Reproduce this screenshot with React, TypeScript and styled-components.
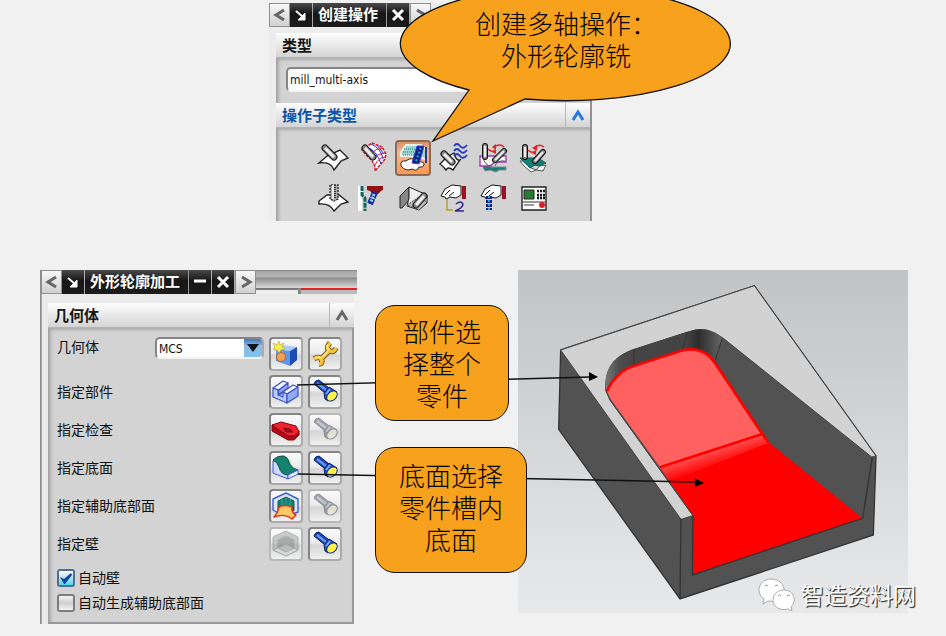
import React from 'react';
import styled, { createGlobalStyle, css } from 'styled-components';

const ORANGE = '#f7a11c';
const UI_FONT = '"Noto Sans", "Noto Sans CJK SC", sans-serif';

const GlobalStyle = createGlobalStyle`
  * { box-sizing: border-box; }
  body { margin: 0; background: #f1f1f1; }
  button, select, input { font: inherit; margin: 0; padding: 0; }
`;

const Slide = styled.main`
  min-height: 636px;
  overflow: hidden;
  background: #f1f1f1;
  color: #111;
  font: 14px/20px ${UI_FONT};
`;

const TopArea = styled.section`
  display: flex;
  padding: 3px 0 0 269px;
`;

const TopDialog = styled.div`
  position: relative;
  width: 323px;
  background: #ececec;
`;

const TitleBar = styled.header`
  display: flex;
  height: 24px;
`;

const TitleName = styled.h2`
  margin: 0;
  padding: 0 8px 0 5px;
  background: linear-gradient(#4a4a4a, #161616 45%, #1c1c1c);
  border-right: 1px solid #999;
  color: #fff;
  font-size: 15px;
  font-weight: 700;
  line-height: 22px;
  white-space: nowrap;
`;

const TitleButton = styled.button<{ $light?: boolean }>`
  display: grid;
  place-items: center;
  width: 23px;
  border: 0;
  border-right: 1px solid #aaa;
  background: ${(p) =>
    p.$light ? 'linear-gradient(#f8f8f8, #d0d0d0)' : 'linear-gradient(#4a4a4a, #161616 45%, #1c1c1c)'};
  ${(p) => p.$light && css`border: 1px solid #909090; width: 21px;`}
`;

const BehindStrip = styled.div`
  flex: 1;
  display: flex;
  flex-direction: column;
  border-top: 1px solid #888;
  background: linear-gradient(#a4a4a4, #b8b8b8 25%, #8c8c8c 30%, #d2d2d2 70%, #f1f1f1);
`;

const BehindTabs = styled.div`
  display: grid;
  grid-template-columns: 42px 1fr;
  gap: 3px;
  height: 6px;
  margin-top: auto;
  background: #888;
`;

const BehindTab = styled.span<{ $active?: boolean }>`
  background: ${(p) => (p.$active ? '#bbb' : '#eee')};
  border-top: 2px solid ${(p) => (p.$active ? '#e02128' : '#777')};
`;

const PanelHeader = styled.h3<{ $accent?: boolean }>`
  display: flex;
  align-items: stretch;
  height: 25px;
  margin: 0;
  padding-left: 6px;
  background: linear-gradient(#fdfdfd, #e9e9e9 50%, #d4d4d4);
  border-bottom: 1px solid #b4b4b4;
  color: ${(p) => (p.$accent ? '#0a55a8' : '#151515')};
  font-size: 15px;
  font-weight: 700;
  line-height: 24px;
`;

const CollapseButton = styled.button`
  display: grid;
  place-items: center;
  width: 25px;
  margin-left: auto;
  border: 0;
  border-left: 1px solid #b8b8b8;
  background: transparent;
`;

const TopPanels = styled.div`
  margin: 6px 0 0 7px;
  border-right: 2px solid #929292;
`;

const PanelBody = styled.div`
  background: #d3d3d3;
  border-left: 1px solid #a5a5a5;
  box-shadow: inset 2px 2px 3px #aaa;
`;

const TypeBody = styled(PanelBody)`
  padding: 9px 9px 11px;
`;

const SelectBox = styled.span<{ $compact?: boolean }>`
  display: flex;
  width: ${(p) => (p.$compact ? '109px' : '100%')};
  height: ${(p) => (p.$compact ? '22px' : '25px')};
  border: 2px solid #858585;
  border-right-color: #aaa;
  border-bottom-color: #f3f3f3;
  border-radius: 5px;
  background: #fff;
  overflow: hidden;
`;

const Select = styled.select`
  flex: 1;
  min-width: 0;
  padding-left: 2px;
  border: 0;
  background: transparent;
  appearance: none;
  color: #111;
  font-family: "DejaVu Sans Condensed", "Noto Sans", sans-serif;
  font-size: 12px;
`;

const DropMark = styled.span`
  display: grid;
  place-items: center;
  width: 18px;
  background: linear-gradient(#3a78c8, #8fbbe4 40%, #7fc0ee);
`;

const ToolGrid = styled(PanelBody)`
  display: grid;
  grid-template-columns: repeat(6, 36px);
  grid-auto-rows: 36px;
  gap: 4px;
  padding: 12px 0 5px 38px;
`;

const ToolButton = styled.button<{ $active?: boolean }>`
  display: grid;
  place-items: center;
  border: 0;
  background: transparent;
  ${(p) =>
    p.$active &&
    css`
      border: 2px solid #8d6a55;
      border-radius: 4px;
      background: linear-gradient(#d99468, #f7b98c 35%, #ff9850);
    `}
`;

const Bubble = styled.div`
  position: absolute;
  top: -16px;
  left: 132px;
  width: 330px;
  height: 156px;
`;

const BubbleShape = styled.svg`
  display: block;
  overflow: visible;
`;

const NoteText = styled.p`
  margin: 0;
  color: #000;
  font: 300 26px/32px "Noto Sans CJK SC", sans-serif;
  text-align: center;
`;

const BubbleText = styled(NoteText)`
  position: absolute;
  top: 20px;
  left: 70px;
  right: 70px;
`;

const BottomArea = styled.section`
  position: relative;
  display: grid;
  grid-template-columns: 317px 161px minmax(0, 1fr);
  align-items: start;
  padding: 49px 38px 11px 40px;
`;

const SideDialog = styled.div`
  border-left: 1px solid #8c8c8c;
`;

const SidePanel = styled.div`
  margin-right: 3px;
  padding: 9px 0 0 6px;
  border-left: 1px solid #aaa;
  background: #eaeaea;
`;

const GeometryBody = styled(PanelBody)`
  padding: 7px 10px 7px 8px;
  border-right: 2px solid #999;
  border-bottom: 2px solid #999;
`;

const FieldRow = styled.div<{ $top?: boolean }>`
  display: flex;
  align-items: ${(p) => (p.$top ? 'flex-start' : 'center')};
  gap: 5px;
  height: 38px;
  padding: ${(p) => (p.$top ? '2px 0' : '0')};
`;

const FieldLabel = styled.label`
  flex: 1;
  white-space: nowrap;
`;

const IconButton = styled.button`
  display: grid;
  width: 34px;
  height: 34px;
  border: 2px solid #858585;
  border-right-color: #aaa;
  border-bottom-color: #aaa;
  border-radius: 4px;
  background: linear-gradient(#fafafa, #ececec 45%, #d6d6d6 55%, #f0f0f0);
  &:disabled {
    border-color: #b8b8b8;
  }
  &:disabled svg {
    filter: grayscale(0.8);
    opacity: 0.45;
  }
`;

const ButtonArt = styled.svg`
  margin: -2px;
`;

const CheckList = styled.div`
  padding-top: 2px;
`;

const CheckRow = styled.label`
  display: flex;
  align-items: center;
  gap: 3px;
  height: 25px;
`;

const Check = styled.input`
  appearance: none;
  width: 18px;
  height: 18px;
  border: 2px solid #7d7d7d;
  border-radius: 3px;
  background: linear-gradient(#f4f4f4, #cfcfcf 50%, #f4f4f4);
  &:checked {
    border-color: #526d91;
    background: linear-gradient(#fff, #c6def6 45%, #47dced);
  }
`;

const CheckBox = styled.span`
  display: grid;
  > * { grid-area: 1 / 1; }
  svg { pointer-events: none; }
`;

const Notes = styled.div`
  z-index: 2;
  display: flex;
  flex-direction: column;
  align-items: flex-start;
  gap: 26px;
  padding: 35px 0 0 18px;
`;

const Note = styled.div<{ $wide?: boolean }>`
  width: ${(p) => (p.$wide ? '152px' : '134px')};
  padding: ${(p) => (p.$wide ? '11px 18px 17px' : '9px 26px')};
  border: 1px solid #111;
  border-radius: 20px;
  background: ${ORANGE};
`;

const Connectors = styled.svg`
  position: absolute;
  top: 49px;
  left: 0;
  z-index: 1;
  pointer-events: none;
`;

const ModelView = styled.figure`
  position: relative;
  margin: 0;
`;

const ModelArt = styled.svg`
  display: block;
  width: 100%;
  background: linear-gradient(#c2c3c4, #e8e9ea);
`;

const Watermark = styled.figcaption`
  position: absolute;
  right: -8px;
  bottom: 2px;
  display: flex;
  align-items: center;
  gap: 6px;
  color: #fff;
  font: 23px/34px "Noto Sans CJK SC", sans-serif;
  text-shadow: 1px 1px 1px #333, 1px 1px 0 #666;
  white-space: nowrap;
`;

/* ---------- small glyphs ---------- */

const Chevron = ({ dir, color = '#666' }: { dir: 'left' | 'right' | 'up'; color?: string }) => {
  const d = { left: 'M11 2 3 7l8 5', right: 'M3 2l8 5-8 5', up: 'M2 12 7 4l5 8' }[dir];
  return (
    <svg width="14" height="14" viewBox="0 0 14 14" fill="none" stroke={color} strokeWidth="3">
      <path d={d} />
    </svg>
  );
};

const PinArrow = () => (
  <svg width="14" height="14" viewBox="0 0 14 14" fill="#fff" stroke="#fff">
    <path d="M2 3l7 6" strokeWidth="2" />
    <path d="M11 5v7H4z" />
  </svg>
);

const Cross = () => (
  <svg width="14" height="14" viewBox="0 0 14 14" stroke="#fff" strokeWidth="3">
    <path d="M2 2l10 10M12 2 2 12" />
  </svg>
);

const Minus = () => (
  <svg width="14" height="14" viewBox="0 0 14 14" stroke="#fff" strokeWidth="3">
    <path d="M1 6h12" />
  </svg>
);

/* ---------- operation icons ---------- */

const Cutter = ({ d, w = 7 }: { d: string; w?: number }) => (
  <g fill="none">
    <path d={d} stroke="#111" strokeWidth={w} strokeLinecap="round" />
    <path d={d} stroke="#8a8a8a" strokeWidth={w - 2} strokeLinecap="round" />
    <path d={d} stroke="#eee" strokeWidth={w - 4} />
  </g>
);

const Hand = () => (
  <g stroke="#111" fill="#fff">
    <path d="M25 4v13h4V4z" fill="#9c1024" stroke="none" />
    <path d="M4 14 8 7l7-4 9 1v9l-5 3-6-1-4 2-1-2z" />
    <path d="M8 13l5-5M12 14l5-4" fill="none" />
  </g>
);

const toolArt: Record<string, React.ReactNode> = {
  surface: (
    <>
      <path d="M2 21 10 14l13-6 8 8-7 3-7 9q-3-9-15-7z" fill="#fff" stroke="#222" strokeWidth="1.4" />
      <path d="M5 21h3M23 19l4-2" stroke="#777" />
      <Cutter d="M8 6l9 9" />
    </>
  ),
  mesh: (
    <>
      <path d="M5 8 15 1l10 4 4 7-1 5-10 12q1-8-8-15z" fill="#fff" stroke="#d9142e" strokeDasharray="3 1" strokeWidth="1.5" />
      <path d="M9 5q11 3 15 17M14 2q10 4 12 15M20 3l7 9" fill="none" stroke="#1c25c9" strokeWidth="1" />
      <path d="M14 11q6-5 12-5M15 17q7-6 13-6M18 23q4-8 10-8" fill="none" stroke="#e01838" strokeWidth="1" />
      <Cutter d="M8 6l8 9" />
    </>
  ),
  contour: (
    <>
      <path d="M4 10 9 3h15l5 5v10l-7-4H4z" fill="#9ed3ce" stroke="#eee" strokeWidth="2" />
      <path d="M7 7h14M6 10h13M6 13h13" stroke="#168985" strokeDasharray="1 1" />
      <path d="M4 24q-1-6 5-5l3-2q6-1 8 3 8-1 7 3-1 3-5 2-2 5-7 2-6 3-11-3z" fill="#fff" stroke="#222" />
      <path d="M15 21 20 4h7l-5 18z" fill="#101d8d" stroke="#3248d5" />
      <path d="M19 19 24 5" stroke="#14b6b0" strokeWidth="2" strokeDasharray="2 2" />
      <path d="M29 5v16" stroke="#253a8b" strokeWidth="2" />
    </>
  ),
  waves: (
    <>
      <path d="M3 22 10 15l7-4q2 8 6 7l-7 10q-5-4-7 0-3-4-6-6z" fill="#fff" stroke="#222" strokeWidth="1.4" />
      <Cutter d="M7 12l8 8" />
      <path d="M17 4q3-4 6 0t7-1M17 9q3-4 6 0t7-1M17 14q3-4 6 0t7-1" fill="none" stroke="#2638bb" strokeWidth="1.8" />
    </>
  ),
  zigzag: (
    <>
      <path d="M3 19h4l6 6h16v3h-7l-3 2-6-2-5 1z" fill="#138076" stroke="#888" />
      <path d="M3 14h26v6H18l-5 4H3z" fill="#fff" stroke="#a23bb3" strokeWidth="1.4" />
      <path d="M6 14q1 10 9 10M18 24q2-6 10-5" fill="none" stroke="#555" />
      <Cutter d="M8 4v11" w={6} /><Cutter d="M27 9 18 18" w={6} />
      <path d="M11 7q4 4 8 1M17 5q6-4 10 0" fill="none" stroke="#ec2025" strokeWidth="1.4" />
      <path d="M15 5l4-3v6zM15 10l4-3v5z" fill="#ec2025" />
    </>
  ),
  swarf: (
    <>
      <path d="M3 19h4l5 6 7 3 4-4 6-1-3 6-7-1-5 2-7-6z" fill="#fff" stroke="#555" />
      <path d="M3 16h18l8 5-7 3-4-1-5 3z" fill="#138076" stroke="#09635c" />
      <Cutter d="M8 5v10" w={6} /><Cutter d="M26 10 18 19" w={6} />
      <path d="M11 8q4 4 8 1M17 6q5-5 10-1" fill="none" stroke="#ec2025" strokeWidth="1.4" />
      <path d="M15 6l5-3v6zM15 11l4-3v5z" fill="#ec2025" />
    </>
  ),
  drill: (
    <>
      <path d="M2 19 10 13h12l9 7-7 2-7 7q-4-8-15-7z" fill="#fff" stroke="#222" strokeWidth="1.4" />
      <path d="M13 3v14l4 2 4-2V3z" fill="#aaa" stroke="#333" strokeWidth="1.4" strokeDasharray="2 1" />
      <path d="M16 3v14" stroke="#eee" strokeWidth="2" />
      <path d="M18 3v14" stroke="#333" strokeDasharray="1 1" strokeWidth="2" />
    </>
  ),
  wall: (
    <>
      <path d="M1 4h4v25H1z" fill="#fff" />
      <path d="M5 4v9l3 3v13" fill="none" stroke="#0f6661" strokeWidth="3" strokeDasharray="5 1" />
      <path d="M10 4h16v4l-2 1-3 3h-5l-3-3-3-1z" fill="#901015" />
      <path d="M18 10 13 22" stroke="#1829a3" strokeWidth="6" strokeDasharray="6 1" />
      <path d="M17 12 14 20" stroke="#9bdce2" strokeWidth="3" strokeDasharray="2 1" />
    </>
  ),
  pocket: (
    <>
      <path d="M3 14 12 5v13l-7 8H3z" fill="#888" stroke="#222" />
      <path d="M12 5l18 8v8l-8 7-12-4 2-8z" fill="#eee" stroke="#222" />
      <path d="M10 23 22 15l8 5-8 8z" fill="#bbb" stroke="#444" strokeDasharray="2 1" />
      <Cutter d="M27 14 19 23" w={7} />
    </>
  ),
  handTwo: (
    <>
      <Hand />
      <path d="M10 17v11h6" fill="none" stroke="#b5a019" strokeWidth="1.4" />
      <path d="M19 22q5-4 7 0 0 4-8 7h9" fill="none" stroke="#342997" strokeWidth="1.6" />
    </>
  ),
  handTool: (
    <>
      <Hand />
      <path d="M12 14v14" stroke="#151f87" strokeWidth="6" strokeDasharray="3 1" />
      <path d="M12 14v14" stroke="#19abbc" strokeWidth="2" strokeDasharray="2 2" />
    </>
  ),
  console: (
    <>
      <path d="M5 5h24v23H5z" fill="#fff" stroke="#222" strokeWidth="1.4" />
      <path d="M7 8h10v9H7z" fill="#277c32" stroke="#222" />
      <path d="M20 9h8M20 13h8M20 16h8" stroke="#111" strokeWidth="2.4" strokeDasharray="2 1" />
      <path d="M6 20h22M7 23h10" stroke="#999" strokeWidth="2" />
      <circle cx="25" cy="23" r="3" fill="#e01c24" />
    </>
  ),
};

const tools: [string, string][] = [
  ['surface', '可变轴曲面轮廓铣'],
  ['mesh', '可变流线铣'],
  ['contour', '外形轮廓铣'],
  ['waves', '固定轮廓铣'],
  ['zigzag', '深度五轴铣'],
  ['swarf', '顺序铣'],
  ['drill', '钻孔'],
  ['wall', '侧壁'],
  ['pocket', '型腔'],
  ['handTwo', '用户定义'],
  ['handTool', '手动'],
  ['console', '机床控制'],
];

/* ---------- geometry icons ---------- */

const geometryArt: Record<string, React.ReactNode> = {
  newGeometry: (
    <>
      <path d="M7 12 14 8l14 2-7 4z" fill="#a9ccf8" />
      <path d="M7 12l14 2v15L7 24z" fill="#5e96ec" />
      <path d="M21 14l7-4v13l-7 6z" fill="#1c4bb6" />
      <circle cx="12" cy="20" r="4.5" fill="#f3a154" stroke="#b56129" />
      <path d="M10 4l1 4 4-2-2 4 3 2-4 1-2 3-2-3-4 0 2-3-2-4 4 2z" fill="#ffec42" stroke="#b1a330" strokeWidth=".6" />
    </>
  ),
  wrench: (
    <g fill="none" strokeLinejoin="round">
      <path d="M22 6q-5 5 0 8 4 2 6-3M6 22q6-4 8 2 0 3-3 3M13 22l9-9" stroke="#76511a" strokeWidth="5.4" />
      <path d="M22 6q-5 5 0 8 4 2 6-3M6 22q6-4 8 2 0 3-3 3M13 22l9-9" stroke="#f5c332" strokeWidth="3.6" />
      <path d="M20 8q-2 4 2 5M14 20l6-6M7 21q5-2 6 1" stroke="#fff0a0" strokeWidth="1.3" />
    </g>
  ),
  part: (
    <g stroke="#3c51c7" strokeWidth="1.2" strokeLinejoin="round">
      <path d="M4 13 14 6l5 2-9 7z" fill="#eef3ff" />
      <path d="M9 21l10-8v7l-5 3z" fill="#b7c9ff" />
      <path d="M10 15l9-7v5l-10 7z" fill="#92a7ec" />
      <path d="M4 13l5 2v5l5 2v-5l4 2v9L4 22z" fill="#b9ccff" />
      <path d="M14 17l10-7 5 2-11 7z" fill="#f8faff" />
      <path d="M18 19l11-7v9l-11 7z" fill="#90abf6" />
    </g>
  ),
  lamp: (
    <g strokeLinejoin="round">
      <path d="M6 9q1-4 5-4l10 8-4 5z" fill="#203eb0" stroke="#0b1f6e" />
      <path d="M9 8l9 7" stroke="#5b9cef" strokeWidth="2.4" />
      <path d="M16 18l5-6 8 5-9 9-3-2z" fill="#2450c4" stroke="#0c2168" />
      <path d="M18 19l4-5" stroke="#6fa8f2" strokeWidth="2" />
      <ellipse cx="24" cy="21" rx="6" ry="4.2" transform="rotate(-42 24 21)" fill="#fff047" stroke="#183579" />
    </g>
  ),
  check: (
    <g stroke="#7d0712" strokeLinejoin="round">
      <path d="M3 12v6l16 9h6l5-5v-4z" fill="#b30716" />
      <path d="M3 12 12 9l15 4 3 6-5 4h-6z" fill="#ee2530" />
      <path d="M14 15l7 1 3 3h-7z" fill="#a6101a" />
    </g>
  ),
  floor: (
    <g strokeLinejoin="round">
      <path d="M4 10v12l15 6v-6q-7 0-9-8-2-4-6-4z" fill="#cbd8ff" stroke="#4357d2" />
      <path d="M4 9q5-5 11-4 4 1 6 8 2 5 8 6l-10 5q-7 0-9-8-2-6-6-7z" fill="#16836f" stroke="#06594c" />
      <path d="M19 24l10-5v4l-10 5z" fill="#e9efff" stroke="#4357d2" />
    </g>
  ),
  auxFloor: (
    <g strokeLinejoin="round">
      <path d="M4 10 17 4l12 6v13l-5 2-7-8-8 7-5-3z" fill="#dce7ff" stroke="#3e5ed3" strokeWidth="1.4" />
      <path d="M9 12 17 8l8 4v10l-8-6-8 6z" fill="#14816f" stroke="#065d52" />
      <path d="M13 10v8M17 8v9M21 10v9" stroke="#38a494" />
      <path d="M10 18q6-3 13 0-1 5 4 8l-4 4q-8-6-18-2 4-4 5-10z" fill="#ffc865" stroke="#e32d15" strokeWidth="1.4" />
    </g>
  ),
  walls: (
    <g stroke="#56696a" strokeLinejoin="round">
      <path d="M4 10 17 4l12 6v13l-12 6-13-6z" fill="#89a" />
      <path d="M9 13l8-4 8 4v8l-8-4-8 4z" fill="#3c6258" />
      <path d="M4 23l5-2 8 4 8-4 4 2-12 6z" fill="#ccd" />
    </g>
  ),
};

const fields: { label: string; icon: string; iconOff?: boolean; lampOff?: boolean }[] = [
  { label: '指定部件', icon: 'part' },
  { label: '指定检查', icon: 'check', lampOff: true },
  { label: '指定底面', icon: 'floor' },
  { label: '指定辅助底部面', icon: 'auxFloor', lampOff: true },
  { label: '指定壁', icon: 'walls', iconOff: true },
];

const ArtButton = ({ art, name, id, off }: { art: string; name: string; id?: string; off?: boolean }) => (
  <IconButton id={id} type="button" aria-label={name} disabled={off}>
    <ButtonArt width="34" height="34" viewBox="0 0 34 34">{geometryArt[art]}</ButtonArt>
  </IconButton>
);

const Checkbox = ({ label, checked }: { label: string; checked?: boolean }) => (
  <CheckRow>
    <CheckBox>
      <Check type="checkbox" defaultChecked={checked} />
      {checked && (
        <svg width="18" height="18" viewBox="0 0 18 18">
          <path d="M3 8l4 2 7-6 1 2-7 9H7z" fill="#064b9d" />
        </svg>
      )}
    </CheckBox>
    {label}
  </CheckRow>
);

const CreateDialog = () => (
  <TopDialog>
    <TitleBar>
      <TitleButton $light aria-label="上一个"><Chevron dir="left" /></TitleButton>
      <TitleButton aria-label="固定"><PinArrow /></TitleButton>
      <TitleName>创建操作</TitleName>
      <TitleButton aria-label="关闭"><Cross /></TitleButton>
      <TitleButton $light aria-label="下一个"><Chevron dir="right" /></TitleButton>
    </TitleBar>
    <TopPanels>
      <PanelHeader>类型</PanelHeader>
      <TypeBody>
        <SelectBox>
          <Select aria-label="类型"><option>mill_multi-axis</option></Select>
        </SelectBox>
      </TypeBody>
      <PanelHeader $accent>
        操作子类型
        <CollapseButton aria-label="折叠操作子类型"><Chevron dir="up" color="#2477df" /></CollapseButton>
      </PanelHeader>
      <ToolGrid>
        {tools.map(([key, name]) => (
          <ToolButton key={key} type="button" aria-label={name} $active={key === 'contour'}>
            <svg width="32" height="32" viewBox="0 0 32 32">{toolArt[key]}</svg>
          </ToolButton>
        ))}
      </ToolGrid>
    </TopPanels>
    <Bubble>
      <BubbleShape width="330" height="156" viewBox="0 0 330 156">
        <path d="M124 112A165 57 0 1 0 68 103L32 154z" fill={ORANGE} stroke="#111" strokeWidth="1.3" />
      </BubbleShape>
      <BubbleText>创建多轴操作：外形轮廓铣</BubbleText>
    </Bubble>
  </TopDialog>
);

const ContourDialog = () => (
  <SideDialog>
    <TitleBar>
      <TitleButton $light aria-label="上一个"><Chevron dir="left" /></TitleButton>
      <TitleButton aria-label="固定"><PinArrow /></TitleButton>
      <TitleName>外形轮廓加工</TitleName>
      <TitleButton aria-label="最小化"><Minus /></TitleButton>
      <TitleButton aria-label="关闭"><Cross /></TitleButton>
      <TitleButton $light aria-label="下一个"><Chevron dir="right" /></TitleButton>
      <BehindStrip>
        <BehindTabs><BehindTab /><BehindTab $active /></BehindTabs>
      </BehindStrip>
    </TitleBar>
    <SidePanel>
      <PanelHeader>
        几何体
        <CollapseButton aria-label="折叠几何体"><Chevron dir="up" /></CollapseButton>
      </PanelHeader>
      <GeometryBody>
        <FieldRow $top>
          <FieldLabel htmlFor="geometry">几何体</FieldLabel>
          <SelectBox $compact>
            <Select id="geometry"><option>MCS</option></Select>
            <DropMark>
              <svg width="12" height="8" viewBox="0 0 12 8"><path d="M0 0h12L6 8z" fill="#10151c" /></svg>
            </DropMark>
          </SelectBox>
          <ArtButton art="newGeometry" name="新建几何体" />
          <ArtButton art="wrench" name="编辑几何体" />
        </FieldRow>
        {fields.map((f) => (
          <FieldRow key={f.icon}>
            <FieldLabel htmlFor={f.icon}>{f.label}</FieldLabel>
            <ArtButton id={f.icon} art={f.icon} name={f.label} off={f.iconOff} />
            <ArtButton art="lamp" name={`显示${f.label}`} off={f.lampOff} />
          </FieldRow>
        ))}
        <CheckList>
          <Checkbox label="自动壁" checked />
          <Checkbox label="自动生成辅助底部面" />
        </CheckList>
      </GeometryBody>
    </SidePanel>
  </SideDialog>
);

const Model = () => (
  <ModelView>
    <ModelArt viewBox="24 30 1170 1029">
      <defs>
        <linearGradient id="cornerLeft" x1="0" x2="1">
          <stop offset="0" stopColor="#777" /><stop offset=".5" stopColor="#4c4c4c" /><stop offset="1" stopColor="#444" />
        </linearGradient>
        <linearGradient id="cornerTop" x1="0" x2="1">
          <stop offset="0" stopColor="#4a4a4a" /><stop offset=".4" stopColor="#2d2d2d" /><stop offset="1" stopColor="#666" />
        </linearGradient>
        <linearGradient id="bend" gradientUnits="userSpaceOnUse" x1="600" y1="573" x2="616" y2="622">
          <stop offset="0" stopColor="#ff5050" /><stop offset="1" stopColor="#f00" />
        </linearGradient>
      </defs>
      <path d="M152 270 733 77 1098 588 1090 825 510 1017 146 508z" fill="#525252" stroke="#333" strokeWidth="4" />
      <path d="M152 270 733 77 1098 588 1085 591 640 235Q590 195 530 217L372 268C310 290 285 325 287 390L300 420 549 767 513 778z" fill="#d2d2d2" stroke="#444" strokeWidth="3" />
      <path d="M287 390C282 325 310 290 372 268V318C335 330 305 360 291 396z" fill="url(#cornerLeft)" />
      <path d="M372 268 532 216 518 270 368 320z" fill="#444" />
      <path d="M532 216Q590 192 637 234L614 304Q580 255 518 270z" fill="url(#cornerTop)" />
      <path d="M372 268v50M532 216l-14 54M637 234l-23 70" stroke="#333" strokeWidth="3" />
      <path d="M291 394C305 358 340 326 372 318L518 271Q580 257 615 309L757 522 450 622 300 415z" fill="#ff6060" />
      <path d="M450 622 757 522 778 548 1058 775 547 945 549 767z" fill="#f00" />
      <path d="M450 622 757 522 778 548 480 665z" fill="url(#bend)" />
      <path d="M291 394C305 358 340 326 372 318L518 271Q580 257 615 309L757 522 775 548" fill="none" stroke="#f00" strokeWidth="8" />
      <path d="M450 622 757 522" stroke="#f00" strokeWidth="8" />
      <path d="M287 390 300 420 549 767" fill="none" stroke="#444" strokeWidth="3" />
      <path d="M1087 592 1058 775 547 945 549 767M513 778l-3 239" fill="none" stroke="#333" strokeWidth="4" />
    </ModelArt>
    <Watermark>
      <svg width="37" height="34" viewBox="0 0 37 34" fill="#fff" stroke="#999" strokeWidth=".8">
        <path d="M13 2C6 2 1 7 1 13c0 4 2 7 5 9l-1 5 5-3c13 2 17-5 16-12C25 6 20 2 13 2z" />
        <path d="M26 13c-6 0-11 4-11 10 0 7 7 11 15 9l4 2-1-4c6-6 3-17-7-17z" />
        <g fill="none" stroke="#777">
          <path d="M7 9q2-2 3 0M17 9q2-2 3 0M20 19q2-2 3 0M29 19q2-2 3 0" />
        </g>
      </svg>
      智造资料网
    </Watermark>
  </ModelView>
);

export default function App() {
  return (
    <Slide>
      <GlobalStyle />
      <TopArea><CreateDialog /></TopArea>
      <BottomArea>
        <ContourDialog />
        <Notes>
          <Note><NoteText>部件选择整个零件</NoteText></Note>
          <Note $wide><NoteText>底面选择零件槽内底面</NoteText></Note>
        </Notes>
        <Model />
        <Connectors width="720" height="343" viewBox="0 0 720 343">
          <path d="M297 115 590 107M298 204 695 212" stroke="#111" strokeWidth="1.3" />
          <path d="M589 102v9l9-4zM695 208v9l9-4z" />
        </Connectors>
      </BottomArea>
    </Slide>
  );
}
